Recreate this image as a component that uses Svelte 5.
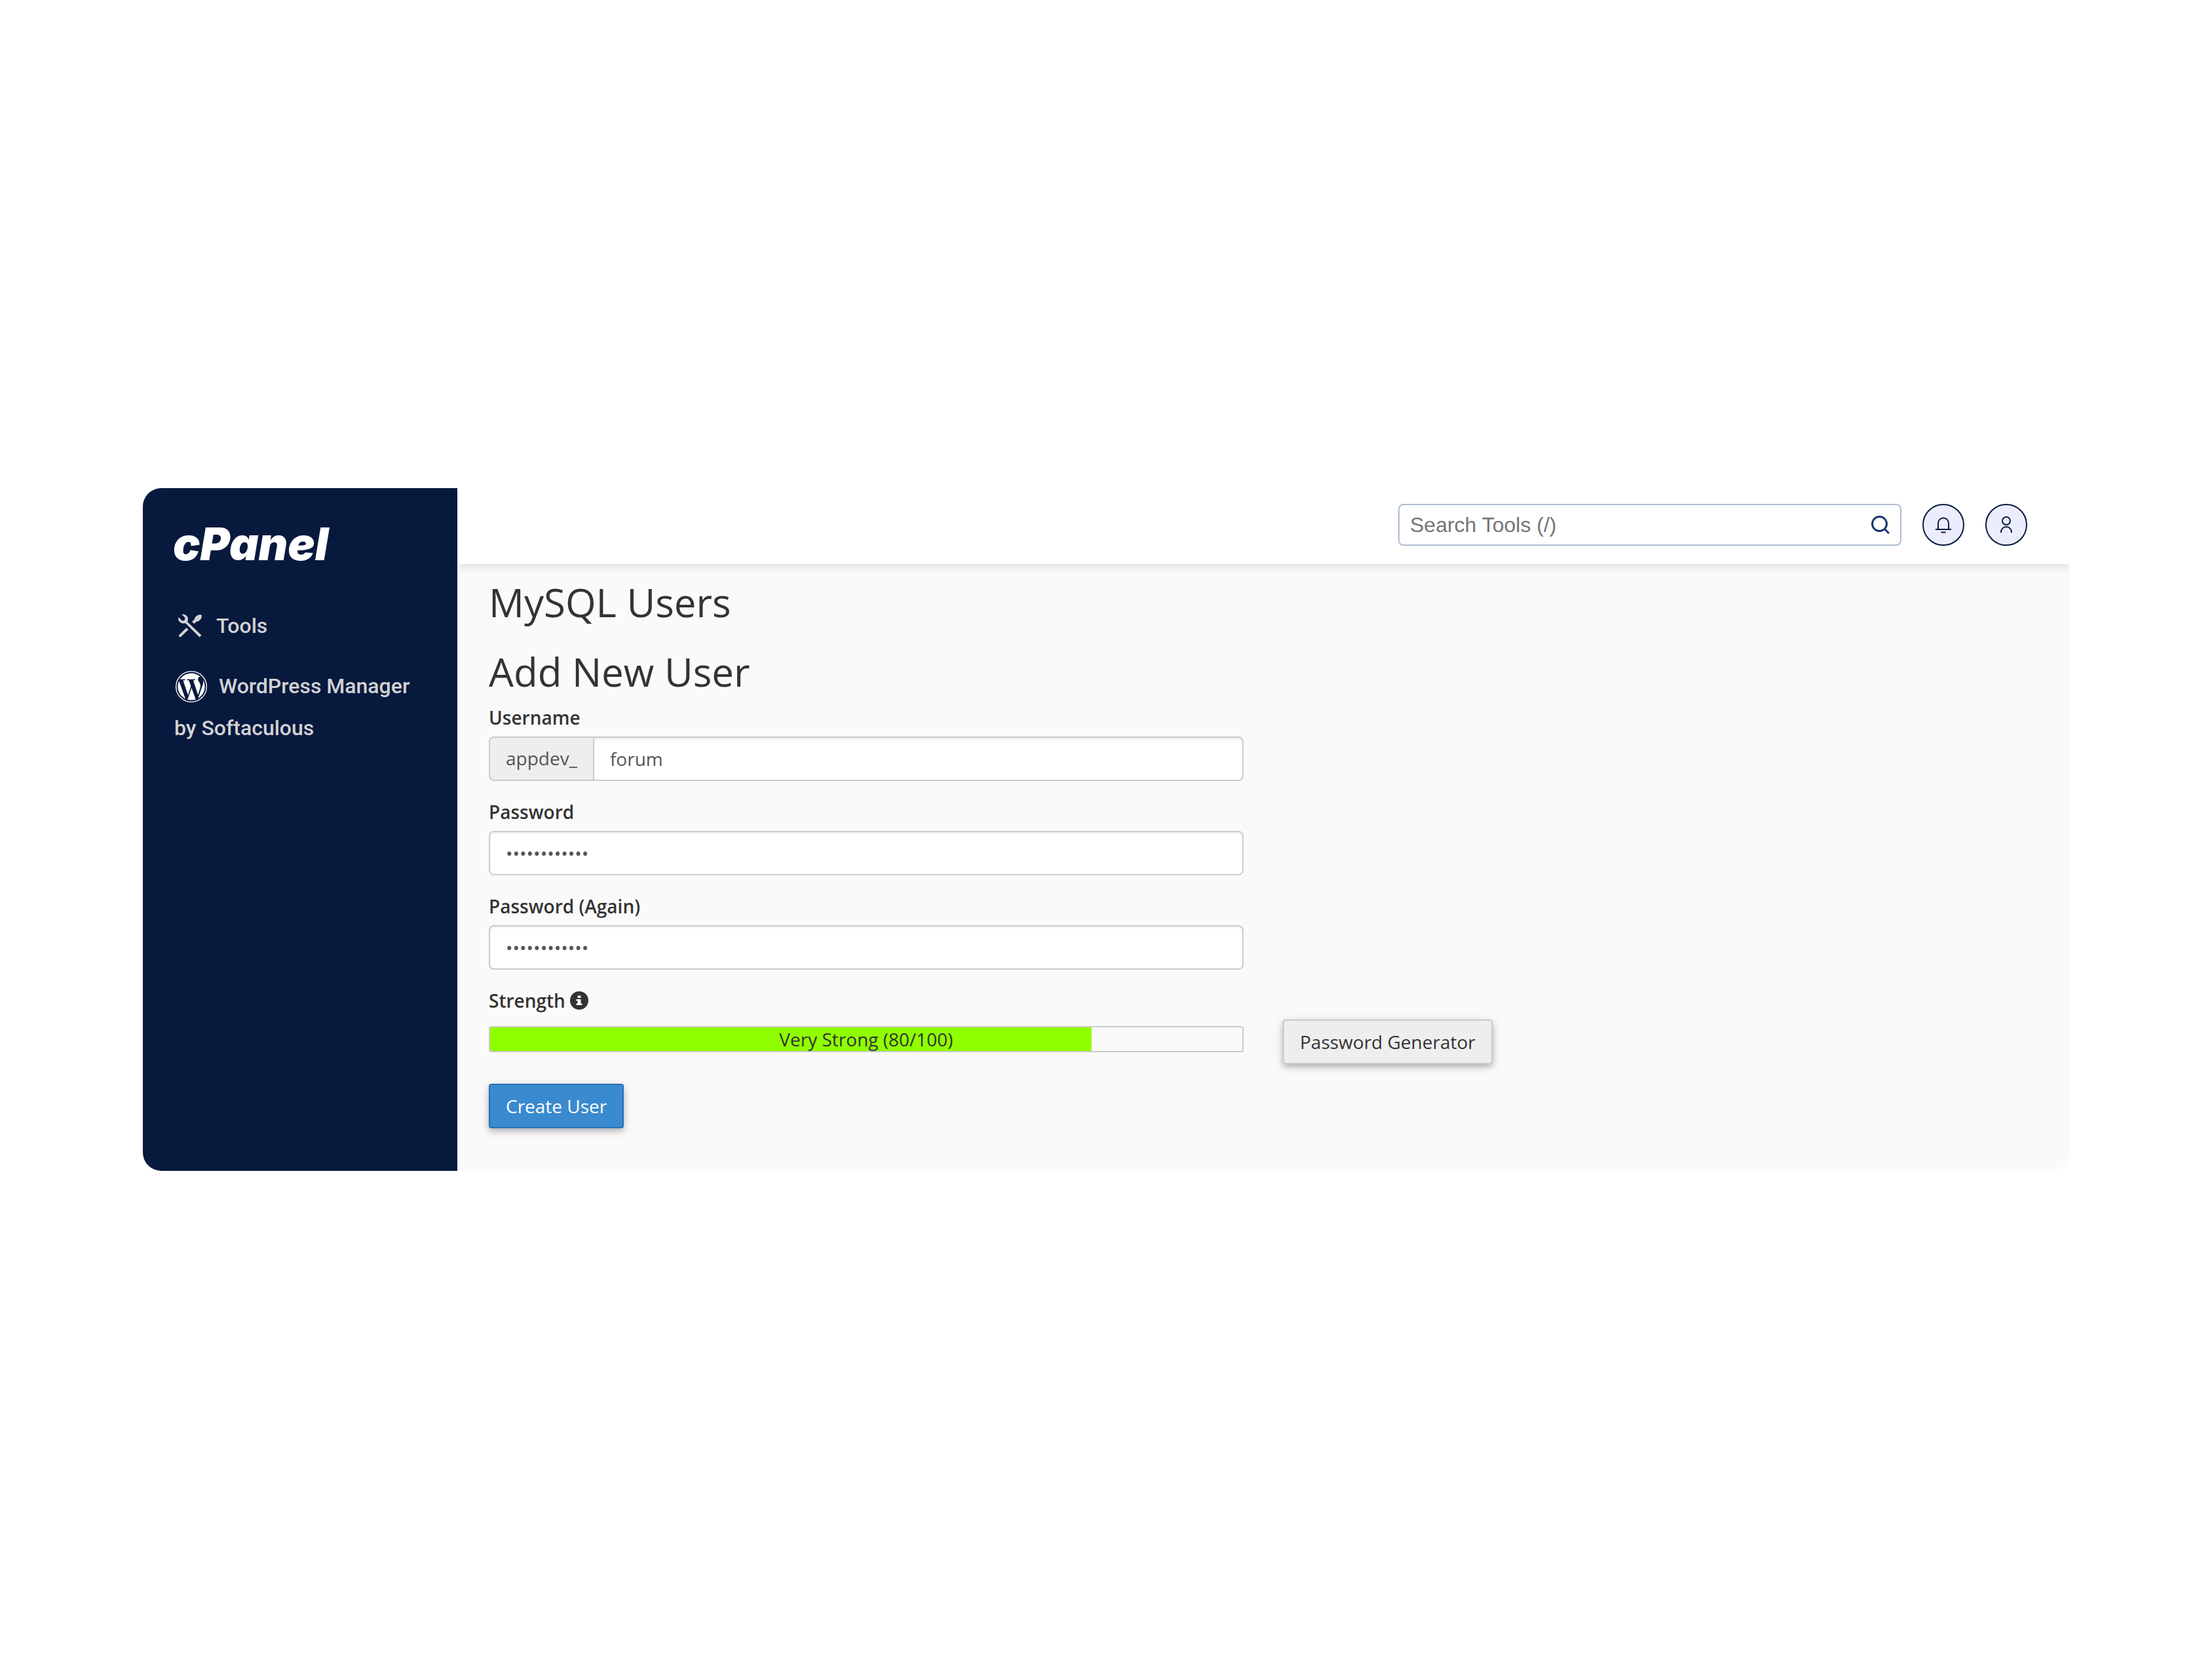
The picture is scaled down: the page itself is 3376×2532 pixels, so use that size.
<script>
  const passwordFields = [
    { id: 'password', label: 'Password' },
    { id: 'password-again', label: 'Password (Again)' },
  ];
  const strength = 80;
</script>

<div class="stage">
  <div class="panel">
    <aside class="sidebar">
      <a class="logo" href="#home" aria-label="cPanel">
        <svg viewBox="0 0 240 60" aria-hidden="true">
          <text x="-2" y="55">cPanel</text>
        </svg>
      </a>
      <nav>
        <a class="tools" href="#tools">
          <svg viewBox="0 0 36 36" aria-hidden="true">
            <path d="M5.500 .8C10 -.5 15 3 15 8C15 9.500 14.500 11 14 12L35.500 32.500L32.500 35.500L11 14C7 16 .5 13 0 7.500L.5 5L5 9.500C7 11.500 10.500 10 10.500 7C10.500 5 7.500 3.500 5.500 .8Z" />
            <path d="M34 .8L36 2.500C36 6.500 34 9.500 31 11C29.500 11.500 28.500 11 27.500 12L24.500 15L21 12L25 8C25 5 28.500 1.500 34 .8Z" />
            <path d="M12.500 21L15.500 24L4 35C2.500 36 0 34 1 32.500Z" />
          </svg>
          <span>Tools</span>
        </a>
        <a class="wordpress" href="#wordpress">
          <svg viewBox="8 8 496 496" aria-hidden="true">
            <circle cx="256" cy="256" r="241" />
            <path d="M61.700 169.400l101.500 278C92.200 413 43.300 340.200 43.300 256c0-30.900 6.600-60.100 18.400-86.600zm337.900 75.900c0-26.300-9.400-44.500-17.500-58.700-10.800-17.500-20.900-32.400-20.900-49.900 0-19.600 14.800-37.800 35.700-37.800.9 0 1.800.1 2.800.2-37.900-34.700-88.300-55.900-143.700-55.900-74.300 0-139.700 38.100-177.800 95.900 5 .2 9.700.3 13.700.3 22.200 0 56.700-2.700 56.700-2.700 11.500-.7 12.800 16.200 1.400 17.500 0 0-11.500 1.300-24.300 2l77.500 230.400L249.800 247l-33.100-90.800c-11.500-.7-22.300-2-22.300-2-11.500-.7-10.100-18.200 1.300-17.500 0 0 35.100 2.700 56 2.700 22.200 0 56.700-2.700 56.700-2.700 11.500-.7 12.800 16.200 1.400 17.500 0 0-11.500 1.300-24.300 2l76.900 228.700 21.200-70.900c9-29.400 16-50.500 16-68.700zm-139.900 29.300l-63.800 185.500c19.100 5.600 39.200 8.700 60.100 8.700 24.800 0 48.500-4.300 70.600-12.100-.6-.9-1.100-1.900-1.500-2.900l-65.400-179.200zm183-120.700c.9 6.800 1.400 14 1.400 21.900 0 21.600-4 45.800-16.200 76.200l-65 187.900C426.200 403 468.700 334.500 468.700 256c0-37-9.400-71.800-26-102.100z" />
          </svg>
          WordPress Manager by Softaculous
        </a>
      </nav>
    </aside>

    <div class="main">
      <header>
        <form class="search" role="search">
          <input type="text" placeholder="Search Tools (/)" aria-label="Search Tools" />
          <button type="button" aria-label="Search">
            <svg viewBox="0 0 28 28" aria-hidden="true">
              <circle cx="12.500" cy="12.500" r="11" />
              <path d="M20 20L27 27" />
            </svg>
          </button>
        </form>
        <button class="round" type="button" aria-label="Notifications">
          <svg viewBox="0 0 32 32" aria-hidden="true">
            <path d="M8 23V13.500a8 8 0 0 1 16 0V23M4 23H28M12.500 27.500H19.500" />
          </svg>
        </button>
        <button class="round" type="button" aria-label="Account">
          <svg viewBox="0 0 32 32" aria-hidden="true">
            <circle cx="16" cy="10" r="6" />
            <path d="M8 28V27a8 8 0 0 1 16 0V28" />
          </svg>
        </button>
      </header>

      <main>
        <h1>MySQL Users</h1>
        <h2>Add New User</h2>
        <form class="grid">
          <div class="field">
            <label for="username">Username</label>
            <div class="group">
              <span>appdev_</span>
              <input id="username" type="text" value="forum" />
            </div>
          </div>
          {#each passwordFields as field}
            <div class="field">
              <label for={field.id}>{field.label}</label>
              <input id={field.id} type="password" value="abcdefghijkl" autocomplete="off" />
            </div>
          {/each}
          <div class="field">
            <div class="label">
              <span>Strength</span>
              <svg viewBox="0 0 28 28" aria-hidden="true">
                <circle cx="14" cy="14" r="14" />
                <path d="M11.500 6.500H16.500V10H11.500ZM9.500 12H16.500V18.500H18.500V21H9.500V18.500H11.500V14.500H9.500Z" />
              </svg>
            </div>
            <div class="meter" role="meter" aria-label="Strength" aria-valuemin="0" aria-valuemax="100" aria-valuenow={strength}>
              <div class="fill" style="width: {strength}%"></div>
              <span>Very Strong ({strength}/100)</span>
            </div>
          </div>
          <button class="generator" type="button">Password Generator</button>
          <button class="create" type="button">Create User</button>
        </form>
      </main>
    </div>
  </div>
</div>

<style>
  :global(body) {
    margin: 0;
    background: #fff;
  }
  .stage, .stage * {
    box-sizing: border-box;
  }
  .stage {
    display: flex;
    align-items: center;
    min-height: 100vh;
    padding: 48px 218px;
    font: 28px/40px 'Open Sans', sans-serif;
    color: #333;
  }
  .panel {
    display: flex;
    flex: 1;
    overflow: hidden;
    border-radius: 28px;
    background: #fafafa;
  }
  input, button {
    font: inherit;
    color: inherit;
    margin: 0;
  }
  .sidebar {
    width: 480px;
    flex: none;
    padding: 55px 48px;
    background: #08193e;
    font: 500 32px/64px Roboto, sans-serif;
  }
  .sidebar a {
    color: #d2d2d2;
    text-decoration: none;
  }
  .logo svg {
    display: block;
    width: 240px;
    height: 60px;
    overflow: visible;
  }
  .logo text {
    font: italic 900 69px Inter, sans-serif;
    fill: #fff;
  }
  nav {
    display: flex;
    flex-direction: column;
    gap: 28px;
    padding-top: 63px;
  }
  .tools {
    display: flex;
    align-items: center;
    gap: 22px;
    padding-left: 6px;
  }
  .tools svg {
    width: 36px;
    height: 36px;
    fill: #d2d2d2;
  }
  .wordpress svg {
    width: 48px;
    height: 48px;
    margin: 0 10px 0 2px;
    vertical-align: -14px;
    fill: #fff;
  }
  .wordpress circle {
    fill: none;
    stroke: #fff;
    stroke-width: 14;
  }
  .main {
    flex: 1;
    min-width: 0;
  }
  header {
    display: flex;
    justify-content: flex-end;
    gap: 32px;
    padding: 24px 64px 28px;
    background: #fff;
    box-shadow: 0 4px 12px rgba(0, 0, 0, 0.12);
  }
  .search {
    display: flex;
    align-items: center;
    width: 768px;
    height: 64px;
    padding: 0 16px;
    border: 2px solid #b0bdd3;
    border-radius: 8px;
    font: 32px/40px 'Liberation Sans', sans-serif;
  }
  .search input {
    flex: 1;
    min-width: 0;
    padding: 0;
    border: 0;
    outline: 0;
    background: none;
  }
  .search input::placeholder {
    color: #757575;
    opacity: 1;
  }
  .search button {
    display: flex;
    padding: 0;
    border: 0;
    background: none;
  }
  .search svg {
    width: 28px;
    height: 28px;
    fill: none;
    stroke: #163570;
    stroke-width: 3;
  }
  .round {
    display: flex;
    align-items: center;
    justify-content: center;
    width: 64px;
    height: 64px;
    padding: 0;
    border: 2px solid #08193e;
    border-radius: 50%;
    background: #ebedfc;
  }
  .round svg {
    width: 32px;
    height: 32px;
    fill: none;
    stroke: #08193e;
    stroke-width: 2;
  }
  main {
    padding: 25px 48px 65px;
  }
  h1, h2 {
    margin: 0;
    font-size: 60px;
    line-height: 66px;
    font-weight: 400;
  }
  h2 {
    margin-top: 40px;
  }
  .grid {
    display: grid;
    grid-template-columns: 1fr 1fr;
    column-gap: 60px;
    row-gap: 27px;
    margin-top: 17px;
  }
  .field {
    grid-column: 1;
    display: flex;
    flex-direction: column;
    gap: 9px;
  }
  label, .label {
    font-weight: 600;
  }
  .label {
    display: flex;
    align-items: center;
    gap: 7px;
    padding-bottom: 10px;
  }
  .label svg {
    width: 28px;
    height: 28px;
    fill: #333;
  }
  .label path {
    fill: #fafafa;
  }
  .field input {
    width: 100%;
    height: 68px;
    padding: 0 24px;
    border: 2px solid #ccc;
    border-radius: 8px;
    background: #fff;
    box-shadow: inset 0 2px 2px rgba(0, 0, 0, 0.075);
    color: #555;
  }
  .group {
    display: flex;
  }
  .group span {
    flex: none;
    height: 68px;
    padding: 0 24px;
    border: 2px solid #ccc;
    border-right: 0;
    border-radius: 8px 0 0 8px;
    background: #eee;
    color: #555;
    line-height: 62px;
  }
  .group input {
    border-radius: 0 8px 8px 0;
  }
  .meter {
    display: grid;
    height: 40px;
    border: 2px solid #ccc;
    border-radius: 4px;
    line-height: 36px;
    text-align: center;
  }
  .meter > * {
    grid-area: 1 / 1;
  }
  .fill {
    background: #8fff00;
  }
  .generator, .create {
    height: 68px;
    padding: 0 24px;
    border: 2px solid #ccc;
    border-radius: 4px;
    background: #eee;
    box-shadow: 0 4px 10px rgba(0, 0, 0, 0.26), 0 4px 20px rgba(0, 0, 0, 0.08);
    justify-self: start;
  }
  .generator {
    grid-column: 2;
    align-self: end;
    margin-bottom: -18px;
  }
  .create {
    grid-column: 1;
    margin-top: 21px;
    border-color: #2a70b3;
    background: #3a8acf;
    color: #fff;
  }
</style>
